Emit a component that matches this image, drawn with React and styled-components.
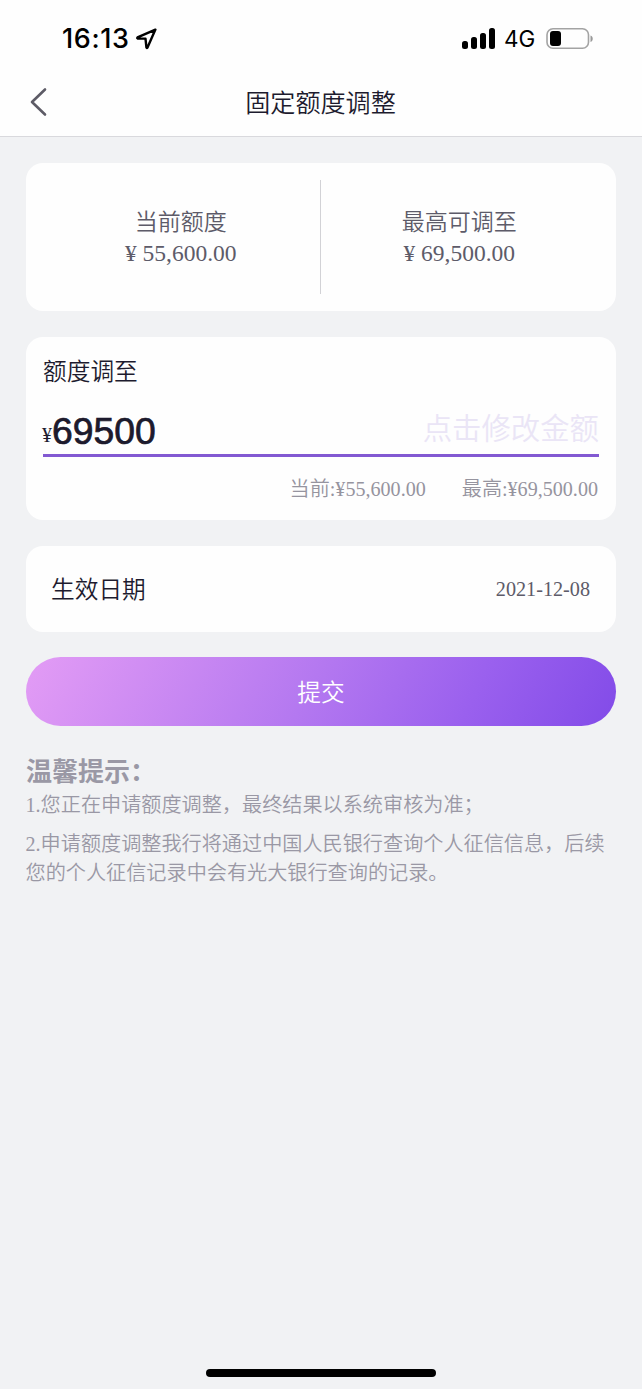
import React from 'react';
import styled, { createGlobalStyle } from 'styled-components';

const GlobalStyle = createGlobalStyle`
  * { box-sizing: border-box; }
  body { margin: 0; background: #f1f2f4; }
`;

const cjk = `"Noto Sans CJK SC", sans-serif`;
const serif = `"Liberation Serif", "Noto Sans CJK SC", serif`;

const Screen = styled.div`
  width: 642px;
  height: 1389px;
  display: flex;
  flex-direction: column;
  overflow: hidden;
  background: #f1f2f4;
  font-family: ${serif};
  font-weight: 350;
  color: #1d1b2e;
  white-space: nowrap;
`;

const StatusBar = styled.header`
  height: 68px;
  padding: 9px 48px 0 62px;
  display: flex;
  align-items: center;
  background: #fefefe;
  color: #000;
  font-family: Inter, sans-serif;
`;

const Clock = styled.span`
  width: 74px;
  font-size: 27px;
  font-weight: 550;
  letter-spacing: 0.6px;
`;

const StatusRight = styled.div`
  margin-left: auto;
  display: flex;
  align-items: center;
`;

const Network = styled.span`
  margin: 0 10px 0 9px;
  width: 32px;
  font-size: 22.5px;
  font-weight: 400;
`;

const NavBar = styled.nav`
  height: 69px;
  flex: none;
  padding: 0 28px;
  display: grid;
  grid-template-columns: 40px 1fr 40px;
  align-items: center;
  background: #fefefe;
  border-bottom: 1px solid #d9d9dd;
`;

const Title = styled.h1`
  margin: 0 1px 3px 0;
  text-align: center;
  font: 350 25.1px/36px ${cjk};
`;

const Content = styled.main`
  flex: 1;
  padding: 26px 26px 0;
`;

const Card = styled.section`
  margin-bottom: 26px;
  border-radius: 17px;
  background: #fefefe;
`;

const LimitsCard = styled(Card)`
  height: 148px;
  padding: 0 18px 0 16px;
  display: flex;
  align-items: center;
`;

const Limit = styled.div`
  flex: 1;
  text-align: center;
  color: #5d5b69;
`;

const LimitLabel = styled.div`
  margin-top: -1px;
  font: 350 23px/33px ${cjk};
`;

const LimitValue = styled.div`
  font-size: 23.5px;
  line-height: 32px;
`;

const Divider = styled.div`
  width: 1px;
  height: 114px;
  background: #d2d2d6;
`;

const AdjustCard = styled(Card)`
  height: 183px;
  padding: 16px 17px 0;
`;

const Label = styled.div`
  font: 350 23.7px/34px ${cjk};
`;

const AmountField = styled.div`
  height: 70px;
  display: flex;
  align-items: flex-start;
  padding-top: 22px;
  border-bottom: 3px solid #8259d2;
`;

const Currency = styled.span`
  margin: 4px 0 0 -1px;
  font-size: 20px;
  line-height: 44px;
`;

const Amount = styled.span`
  font: 400 37.3px/44px "Liberation Sans", sans-serif;
  -webkit-text-stroke: 0.7px #171527;
`;

const Placeholder = styled.span`
  margin: -5px 0 0 auto;
  font: 350 29.4px/44px ${cjk};
  color: #eae5f6;
`;

const Range = styled.div`
  display: flex;
  justify-content: flex-end;
  gap: 36px;
  padding: 18px 1px 0 0;
  font-size: 20.1px;
  line-height: 28px;
  color: #96949f;
`;

const DateCard = styled(Card)`
  height: 86px;
  margin-bottom: 25px;
  padding: 0 26px 0 25px;
  display: flex;
  align-items: center;
  justify-content: space-between;
`;

const DateLabel = styled(Label)`
  margin-bottom: 3px;
`;

const DateValue = styled.span`
  font-size: 20.2px;
  line-height: 28px;
  color: #5d5b69;
`;

const Submit = styled.button`
  display: block;
  width: 100%;
  height: 69px;
  padding: 0 0 1px;
  border: 0;
  border-radius: 35px;
  background: linear-gradient(118deg, #e39cf5 0%, #b478f0 48%, #9a60ee 75%, #824be8 100%);
  color: #fff;
  font: 350 23.7px/68px ${cjk};
`;

const Tips = styled.section`
  margin-top: 27px;
  color: #9a98a5;
`;

const TipsTitle = styled.h2`
  margin: 0 0 4px;
  font: 700 26px/34px ${cjk};
`;

const Tip = styled.p`
  margin: 0 0 9px -0.5px;
  font-size: 20.15px;
  line-height: 29.5px;
`;

const HomeIndicator = styled.div`
  width: 230px;
  height: 8px;
  margin: 0 auto 12px;
  border-radius: 4px;
  background: #000;
`;

const LocationIcon = () => (
  <svg width="22" height="22" viewBox="0 0 22 22" fill="none">
    <path d="M19.4 1.6 1.500 9.400q-.7.900.2 1.100l7.800.1.900 8.800q.4 1.100 1.100.1Z" stroke="#000" strokeWidth="2.4" strokeLinejoin="round" />
  </svg>
);

const SignalIcon = () => (
  <svg width="34" height="22" viewBox="0 0 34 22">
    <rect x="1" y="13" width="6" height="8" rx="2.500" />
    <rect x="10" y="9" width="6" height="12" rx="2.500" />
    <rect x="19" y="5" width="6" height="16" rx="2.500" />
    <rect x="28" y="0" width="6" height="21" rx="2.500" />
  </svg>
);

const BatteryIcon = () => (
  <svg width="48" height="22" viewBox="0 0 48 22">
    <rect x="1" y="0.8" width="41.5" height="19.400" rx="6" fill="none" stroke="#a3a3a3" strokeWidth="1.6" />
    <rect x="4" y="3" width="11" height="15" rx="3" />
    <path d="M44.5 7.5c3 .8 3 5.700 0 6.500Z" fill="#999" />
  </svg>
);

const BackIcon = () => (
  <svg width="20" height="30" viewBox="0 0 20 30" fill="none">
    <path d="M17 2.500 4 15 17 27.500" stroke="#5d5b66" strokeWidth="2.600" strokeLinecap="round" strokeLinejoin="round" />
  </svg>
);

export default function App() {
  return (
    <Screen>
      <GlobalStyle />
      <StatusBar>
        <Clock>16:13</Clock>
        <LocationIcon />
        <StatusRight>
          <SignalIcon />
          <Network>4G</Network>
          <BatteryIcon />
        </StatusRight>
      </StatusBar>
      <NavBar>
        <BackIcon />
        <Title>固定额度调整</Title>
      </NavBar>
      <Content>
        <LimitsCard>
          <Limit>
            <LimitLabel>当前额度</LimitLabel>
            <LimitValue>¥ 55,600.00</LimitValue>
          </Limit>
          <Divider />
          <Limit>
            <LimitLabel>最高可调至</LimitLabel>
            <LimitValue>¥ 69,500.00</LimitValue>
          </Limit>
        </LimitsCard>
        <AdjustCard>
          <Label>额度调至</Label>
          <AmountField>
            <Currency>¥</Currency>
            <Amount>69500</Amount>
            <Placeholder>点击修改金额</Placeholder>
          </AmountField>
          <Range>
            <span>当前:¥55,600.00</span>
            <span>最高:¥69,500.00</span>
          </Range>
        </AdjustCard>
        <DateCard>
          <DateLabel>生效日期</DateLabel>
          <DateValue>2021-12-08</DateValue>
        </DateCard>
        <Submit>提交</Submit>
        <Tips>
          <TipsTitle>温馨提示：</TipsTitle>
          <Tip>1.您正在申请额度调整，最终结果以系统审核为准；</Tip>
          <Tip>
            2.申请额度调整我行将通过中国人民银行查询个人征信信息，后续
            <br />
            您的个人征信记录中会有光大银行查询的记录。
          </Tip>
        </Tips>
      </Content>
      <HomeIndicator />
    </Screen>
  );
}
